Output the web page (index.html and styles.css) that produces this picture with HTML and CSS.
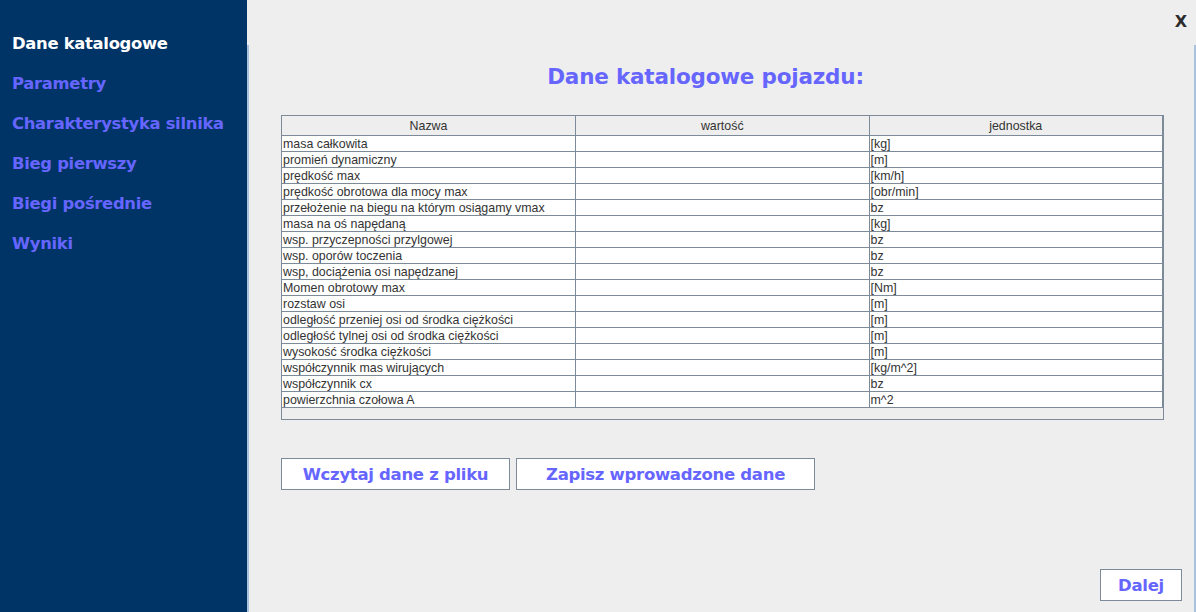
FILE: index.html
```html
<!DOCTYPE html>
<html lang="pl">
<head>
<meta charset="utf-8">
<title>Dane katalogowe</title>
<link rel="stylesheet" href="styles.css">
</head>
<body>
<div class="app">
  <nav class="sidebar">
    <div class="nav-item active">Dane katalogowe</div>
    <div class="nav-item">Parametry</div>
    <div class="nav-item">Charakterystyka silnika</div>
    <div class="nav-item">Bieg pierwszy</div>
    <div class="nav-item">Biegi pośrednie</div>
    <div class="nav-item">Wyniki</div>
  </nav>
  <main class="main">
    <div class="topbar"><span class="close">X</span></div>
    <section class="panel">
      <h1 class="title">Dane katalogowe pojazdu:</h1>
      <div class="grid">
        <table>
          <thead>
            <tr><th>Nazwa</th><th>wartość</th><th>jednostka</th></tr>
          </thead>
          <tbody>
            <tr><td>masa całkowita</td><td></td><td>[kg]</td></tr>
            <tr><td>promień dynamiczny</td><td></td><td>[m]</td></tr>
            <tr><td>prędkość max</td><td></td><td>[km/h]</td></tr>
            <tr><td>prędkość obrotowa dla mocy max</td><td></td><td>[obr/min]</td></tr>
            <tr><td>przełożenie na biegu na którym osiągamy vmax</td><td></td><td>bz</td></tr>
            <tr><td>masa na oś napędaną</td><td></td><td>[kg]</td></tr>
            <tr><td>wsp. przyczepności przylgowej</td><td></td><td>bz</td></tr>
            <tr><td>wsp. oporów toczenia</td><td></td><td>bz</td></tr>
            <tr><td>wsp, dociążenia osi napędzanej</td><td></td><td>bz</td></tr>
            <tr><td>Momen obrotowy max</td><td></td><td>[Nm]</td></tr>
            <tr><td>rozstaw osi</td><td></td><td>[m]</td></tr>
            <tr><td>odległość przeniej osi od środka ciężkości</td><td></td><td>[m]</td></tr>
            <tr><td>odległość tylnej osi od środka ciężkości</td><td></td><td>[m]</td></tr>
            <tr><td>wysokość środka ciężkości</td><td></td><td>[m]</td></tr>
            <tr><td>współczynnik mas wirujących</td><td></td><td>[kg/m^2]</td></tr>
            <tr><td>współczynnik cx</td><td></td><td>bz</td></tr>
            <tr><td>powierzchnia czołowa A</td><td></td><td>m^2</td></tr>
          </tbody>
        </table>
      </div>
      <div class="actions">
        <button class="btn btn-load">Wczytaj dane z pliku</button>
        <button class="btn btn-save">Zapisz wprowadzone dane</button>
      </div>
      <div class="footer">
        <button class="btn btn-next">Dalej</button>
      </div>
    </section>
  </main>
</div>
</body>
</html>
```

FILE: styles.css
```css
* { box-sizing: border-box; }
html, body { margin: 0; padding: 0; }
body {
  width: 1196px;
  height: 612px;
  overflow: hidden;
  background: #eeeeee;
  font-family: "DejaVu Sans", Verdana, sans-serif;
}
.app {
  display: flex;
  height: 612px;
}
.sidebar {
  width: 247px;
  flex: none;
  background: #003366;
  padding-top: 24px;
  padding-left: 12px;
}
.nav-item {
  height: 40px;
  line-height: 40px;
  font-size: 16.4px;
  font-weight: bold;
  color: #6666ff;
  white-space: nowrap;
  letter-spacing: -0.3px;
}
.nav-item.active { color: #ffffff; }
.main {
  flex: 1;
  display: flex;
  flex-direction: column;
  min-width: 0;
}
.topbar {
  height: 45px;
  display: flex;
  justify-content: flex-end;
  align-items: flex-start;
  padding: 13px 9px 0 0;
}
.close {
  font-family: "DejaVu Sans", sans-serif;
  font-weight: bold;
  font-size: 16px;
  color: #2b2b2b;
  line-height: 18px;
}
.panel {
  flex: 1;
  display: flex;
  flex-direction: column;
  border-left: 2px solid #a9c3df;
  border-right: 2px solid #a9c3df;
  padding: 0 30px 11px 32px;
}
.title {
  margin: 15px 0 0 0;
  padding-right: 34px;
  height: 34px;
  line-height: 34px;
  text-align: center;
  font-size: 21.5px;
  font-weight: bold;
  color: #6666ff;
  letter-spacing: -0.2px;
}
.grid {
  margin-top: 21px;
  height: 305px;
  border: 1px solid #7d8a99;
  background: #eeeeee;
}
table {
  width: 100%;
  border-collapse: collapse;
  table-layout: fixed;
  font-family: "Liberation Sans", Arial, sans-serif;
  font-size: 12.4px;
  color: #333333;
}
th, td {
  border-right: 1px solid #7d8a99;
  border-bottom: 1px solid #7d8a99;
  white-space: nowrap;
  overflow: hidden;
}
th {
  height: 19px;
  font-weight: normal;
  background: #eeeeee;
  text-align: center;
  padding: 1px 0 0 0;
}
td {
  height: 15px;
  line-height: 14px;
  background: #ffffff;
  padding: 1px 0 0 1px;
}
.actions {
  display: flex;
  gap: 6px;
  margin-top: 38px;
}
.btn {
  background: #ffffff;
  border: 1px solid #7d8a99;
  height: 32px;
  font-family: "DejaVu Sans", Verdana, sans-serif;
  font-weight: bold;
  font-size: 16.5px;
  color: #6666ff;
  letter-spacing: -0.3px;
  padding: 0;
  cursor: pointer;
}
.btn-load { width: 229px; }
.btn-save { width: 299px; }
.footer {
  margin-top: auto;
  display: flex;
  justify-content: flex-end;
  margin-right: -18px;
}
.btn-next { width: 82px; }
```
